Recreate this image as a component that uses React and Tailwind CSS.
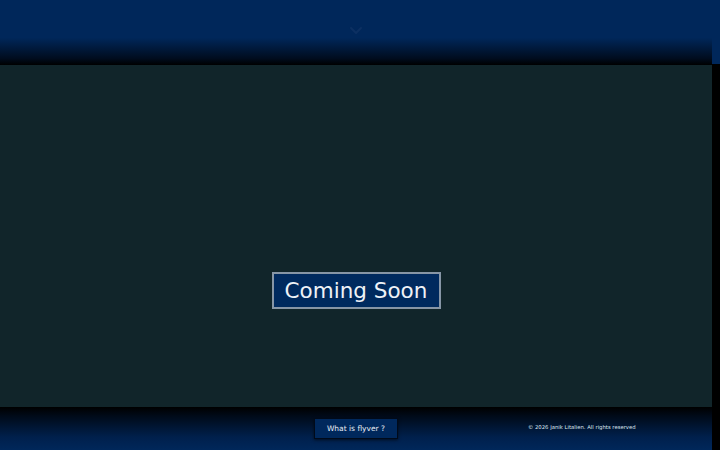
import React from "react";

export default function App() {
  return (
    <div className="flex h-[450px] w-[720px] overflow-hidden bg-black" style={{ fontFamily: '"DejaVu Sans", sans-serif' }}>
      <div className="flex w-[712px] flex-col">
        <header className="flex h-[65px] shrink-0 justify-center bg-[linear-gradient(to_bottom,#00275a_0%,#00275a_58%,#000c1e_90%,#000_100%)]">
          <svg className="mt-[26px]" width="14" height="9" viewBox="0 0 14 9" fill="none">
            <path d="M2 2 L7 7 L12 2" stroke="#0c3062" strokeWidth="2" strokeLinecap="round" strokeLinejoin="round" />
          </svg>
        </header>
        <main className="flex flex-1 flex-col items-center bg-[#11252a] pt-[207px]">
          <div className="flex h-[37px] w-[169px] items-center justify-center border-2 border-[#8796a6] bg-[#002a5e]">
            <span className="text-[21.5px] leading-none text-[#eef2f7]">Coming Soon</span>
          </div>
        </main>
        <footer className="grid h-[43px] shrink-0 grid-cols-[314px_84px_1fr] items-start bg-[linear-gradient(to_bottom,#000_0%,#000a18_20%,#00204c_70%,#00275a_100%)] pt-[11px]">
          <div />
          <div className="flex h-[21px] w-[84px] items-center justify-center border border-[#000a1a] bg-[#00285c] shadow-[0_1px_3px_rgba(0,0,0,0.6)]">
            <span className="text-[7.5px] leading-none text-[#e6ecf4]">What is flyver ?</span>
          </div>
          <div className="flex pl-[130px] pt-[7px]">
            <span className="whitespace-nowrap text-[5.3px] leading-none text-[#dfe6ef]">© 2026 Janik Litalien. All rights reserved</span>
          </div>
        </footer>
      </div>
      <div className="flex w-[8px] flex-col bg-black">
        <div className="h-[64px] bg-[#00275a]" />
      </div>
    </div>
  );
}
